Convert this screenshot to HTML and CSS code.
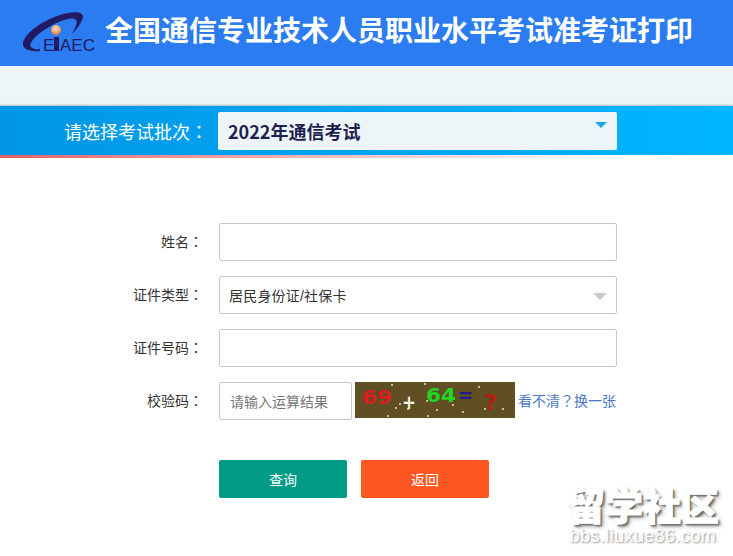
FILE: index.html
```html
<!DOCTYPE html>
<html lang="zh-CN">
  <head>
    <meta charset="UTF-8" />
    <title>全国通信专业技术人员职业水平考试准考证打印</title>
    <link rel="stylesheet" href="styles.css">
  </head>
  <body>
    <div class="header">
      <svg class="logo" width="74" height="42" viewBox="0 0 74 42">
        <defs>
          <radialGradient id="ball" cx="0.45" cy="0.35" r="0.7">
            <stop offset="0" stop-color="#fde3c8" />
            <stop offset="0.55" stop-color="#f5a56c" />
            <stop offset="1" stop-color="#d9703a" />
          </radialGradient>
        </defs>
        <path d="M18 39 C7 40 0 37 1 31 C3 21 22 6 46 1 C56 -1 64 1 60 8 C58 13 54 18 50 22 C53 16 56 11 54 8 C51 4 38 8 27 15 C14 23 6 31 9 35 C11 37 14 38 18 37 Z" fill="#221a63" />
        <circle cx="34" cy="18" r="5" fill="url(#ball)" />
        <rect x="32" y="25" width="5" height="14" fill="#221a63" />
        <text class="logo-text" x="21" y="39">E</text>
        <text class="logo-text" x="38" y="39">AEC</text>
      </svg>
      <h1>全国通信专业技术人员职业水平考试准考证打印</h1>
    </div>
    <div class="band"></div>
    <div class="batch">
      <span class="batch-label">请选择考试批次<span class="colon" lang="zh-TW">：</span></span>
      <div class="batch-select">
        <span>2022年通信考试</span>
        <i class="arrow arrow-blue"></i>
      </div>
    </div>
    <div class="line"></div>

    <div class="form">
      <div class="row">
        <label>姓名<span class="colon" lang="zh-TW">：</span></label>
        <div class="field"></div>
      </div>
      <div class="row">
        <label>证件类型<span class="colon" lang="zh-TW">：</span></label>
        <div class="field field-select">
          <span>居民身份证/社保卡</span>
          <i class="arrow arrow-grey"></i>
        </div>
      </div>
      <div class="row">
        <label>证件号码<span class="colon" lang="zh-TW">：</span></label>
        <div class="field"></div>
      </div>
      <div class="row">
        <label>校验码<span class="colon" lang="zh-TW">：</span></label>
        <div class="field field-code">请输入运算结果</div>
        <svg class="captcha" width="160" height="36" viewBox="0 0 160 36">
          <rect width="160" height="36" fill="#5f4f22" />
          <g fill="#e8e4c8">
            <circle cx="37" cy="3" r="1" /><circle cx="70" cy="2" r="1" /><circle cx="124" cy="5" r="1" />
            <circle cx="45" cy="22" r="1" /><circle cx="41" cy="26" r="1" /><circle cx="53" cy="27" r="1" />
            <circle cx="72" cy="19" r="1" /><circle cx="98" cy="23" r="1" /><circle cx="82" cy="28" r="1" />
            <circle cx="33" cy="34" r="1" /><circle cx="73" cy="34" r="1" /><circle cx="130" cy="27" r="1" />
            <circle cx="148" cy="27" r="1" /><circle cx="108" cy="30" r="1" />
          </g>
          <text class="cap cap-red" x="7" y="22" textLength="30" lengthAdjust="spacingAndGlyphs">69</text>
          <text class="cap cap-white" x="47" y="27" textLength="14" lengthAdjust="spacingAndGlyphs">+</text>
          <text class="cap cap-green" x="71" y="20" textLength="30" lengthAdjust="spacingAndGlyphs">64</text>
          <text class="cap cap-navy" x="103" y="20" textLength="15" lengthAdjust="spacingAndGlyphs">=</text>
          <text class="cap cap-dark" x="129" y="28" textLength="13" lengthAdjust="spacingAndGlyphs">?</text>
        </svg>
        <a class="refresh">看不清<span class="colon" lang="zh-TW">？</span>换一张</a>
      </div>
      <div class="buttons">
        <button class="btn-query">查询</button>
        <button class="btn-back">返回</button>
      </div>
    </div>

    <div class="watermark">
      <div class="wm-title">留学社区</div>
      <div class="wm-url">bbs.liuxue86.com</div>
    </div>
  </body>
</html>
```

FILE: styles.css
```css
* {
  box-sizing: border-box;
}
html,
body {
  height: 556px;
  overflow: hidden;
}
body {
  margin: 0;
  position: relative;
  background-color: white;
  font-family: "Liberation Sans", "Noto Sans CJK SC", sans-serif;
}
.colon {
  font-family: "Noto Sans CJK TC", sans-serif;
}
.header {
  height: 66px;
  background-color: #2a7cf0;
  display: flex;
  align-items: center;
  padding-left: 22px;
}
.logo {
  flex: none;
}
.logo-text {
  font-family: "Liberation Sans", sans-serif;
  font-size: 17px;
  fill: #221a63;
}
.header h1 {
  margin: 0 0 2px 9px;
  color: white;
  font-size: 28px;
  font-weight: bold;
  line-height: 1;
  white-space: nowrap;
}
.band {
  height: 40px;
  background-color: #eef5f8;
}
.batch {
  height: 49px;
  background: linear-gradient(to right, #0096e6, #00b6ff);
  box-shadow: 0 -1px 2px rgba(0, 0, 0, 0.25);
  display: flex;
  align-items: center;
  padding-left: 64px;
}
.batch-label {
  width: 154px;
  color: white;
  font-size: 18px;
}
.batch-select {
  width: 399px;
  height: 38px;
  margin-top: 1px;
  background-color: #eef5f8;
  border-radius: 2px;
  position: relative;
  display: flex;
  align-items: center;
  padding-left: 10px;
  color: #1f1f4d;
  font-family: "Noto Sans CJK SC", sans-serif;
  font-size: 18px;
  font-weight: bold;
}
.line {
  height: 3px;
  background: linear-gradient(to right, #e0606c, #f5c4cc 50%, #ffffff 85%);
}
.arrow {
  position: absolute;
  width: 0;
  height: 0;
  border-left: 6px solid transparent;
  border-right: 6px solid transparent;
}
.arrow-blue {
  right: 10px;
  top: 10px;
  border-top: 6px solid #1ea7e8;
}
.arrow-grey {
  right: 9px;
  top: 16px;
  border-left-width: 7px;
  border-right-width: 7px;
  border-top: 7px solid #c9c9c9;
}
.form {
  padding-top: 65px;
}
.row {
  display: flex;
  align-items: center;
  height: 38px;
  margin-bottom: 15px;
}
.row label {
  width: 211px;
  padding-right: 8px;
  padding-bottom: 2px;
  text-align: right;
  font-size: 14px;
  color: #333;
}
.field {
  width: 398px;
  height: 38px;
  margin-left: 8px;
  border: 1px solid #c8c8c8;
  border-radius: 2px;
  background-color: white;
  display: flex;
  align-items: center;
  padding: 0 0 1px 9px;
  font-size: 14px;
  color: #333;
  position: relative;
}
.field-select span {
  letter-spacing: 0.2px;
}
.field-code {
  width: 133px;
  padding-left: 10px;
  color: #777;
}
.captcha {
  width: 160px;
  height: 36px;
  margin-left: 3px;
  flex: none;
  align-self: flex-start;
}
.cap {
  font-family: "DejaVu Sans", sans-serif;
  font-weight: bold;
  font-size: 19px;
}
.cap-red {
  fill: #d81e1e;
}
.cap-white {
  fill: #f4f4ec;
}
.cap-green {
  fill: #22d622;
}
.cap-navy {
  fill: #1c1c8c;
}
.cap-dark {
  fill: #b81c14;
  font-size: 22px;
}
.refresh {
  margin-left: 3px;
  padding-bottom: 2px;
  color: #4a78c8;
  font-size: 14px;
  white-space: nowrap;
}
.buttons {
  display: flex;
  gap: 14px;
  padding-left: 219px;
  margin-top: 40px;
}
.buttons button {
  width: 128px;
  height: 38px;
  border: none;
  border-radius: 2px;
  color: white;
  font-family: inherit;
  font-size: 14px;
}
.btn-query {
  background-color: #009a87;
}
.btn-back {
  background-color: #ff5722;
}
.watermark {
  position: absolute;
  left: 566px;
  top: 487px;
  width: 154px;
  color: white;
  text-align: center;
  text-shadow: 2px 2px 2px #666, 3px 3px 4px #aaa;
}
.wm-title {
  height: 41px;
  font-size: 38px;
  font-weight: 900;
  line-height: 41px;
  -webkit-text-stroke: 1px white;
  white-space: nowrap;
}
.wm-url {
  font-size: 18px;
  line-height: 16px;
  letter-spacing: 0.4px;
  white-space: nowrap;
  text-shadow: 1px 1px 2px #888;
}
```
